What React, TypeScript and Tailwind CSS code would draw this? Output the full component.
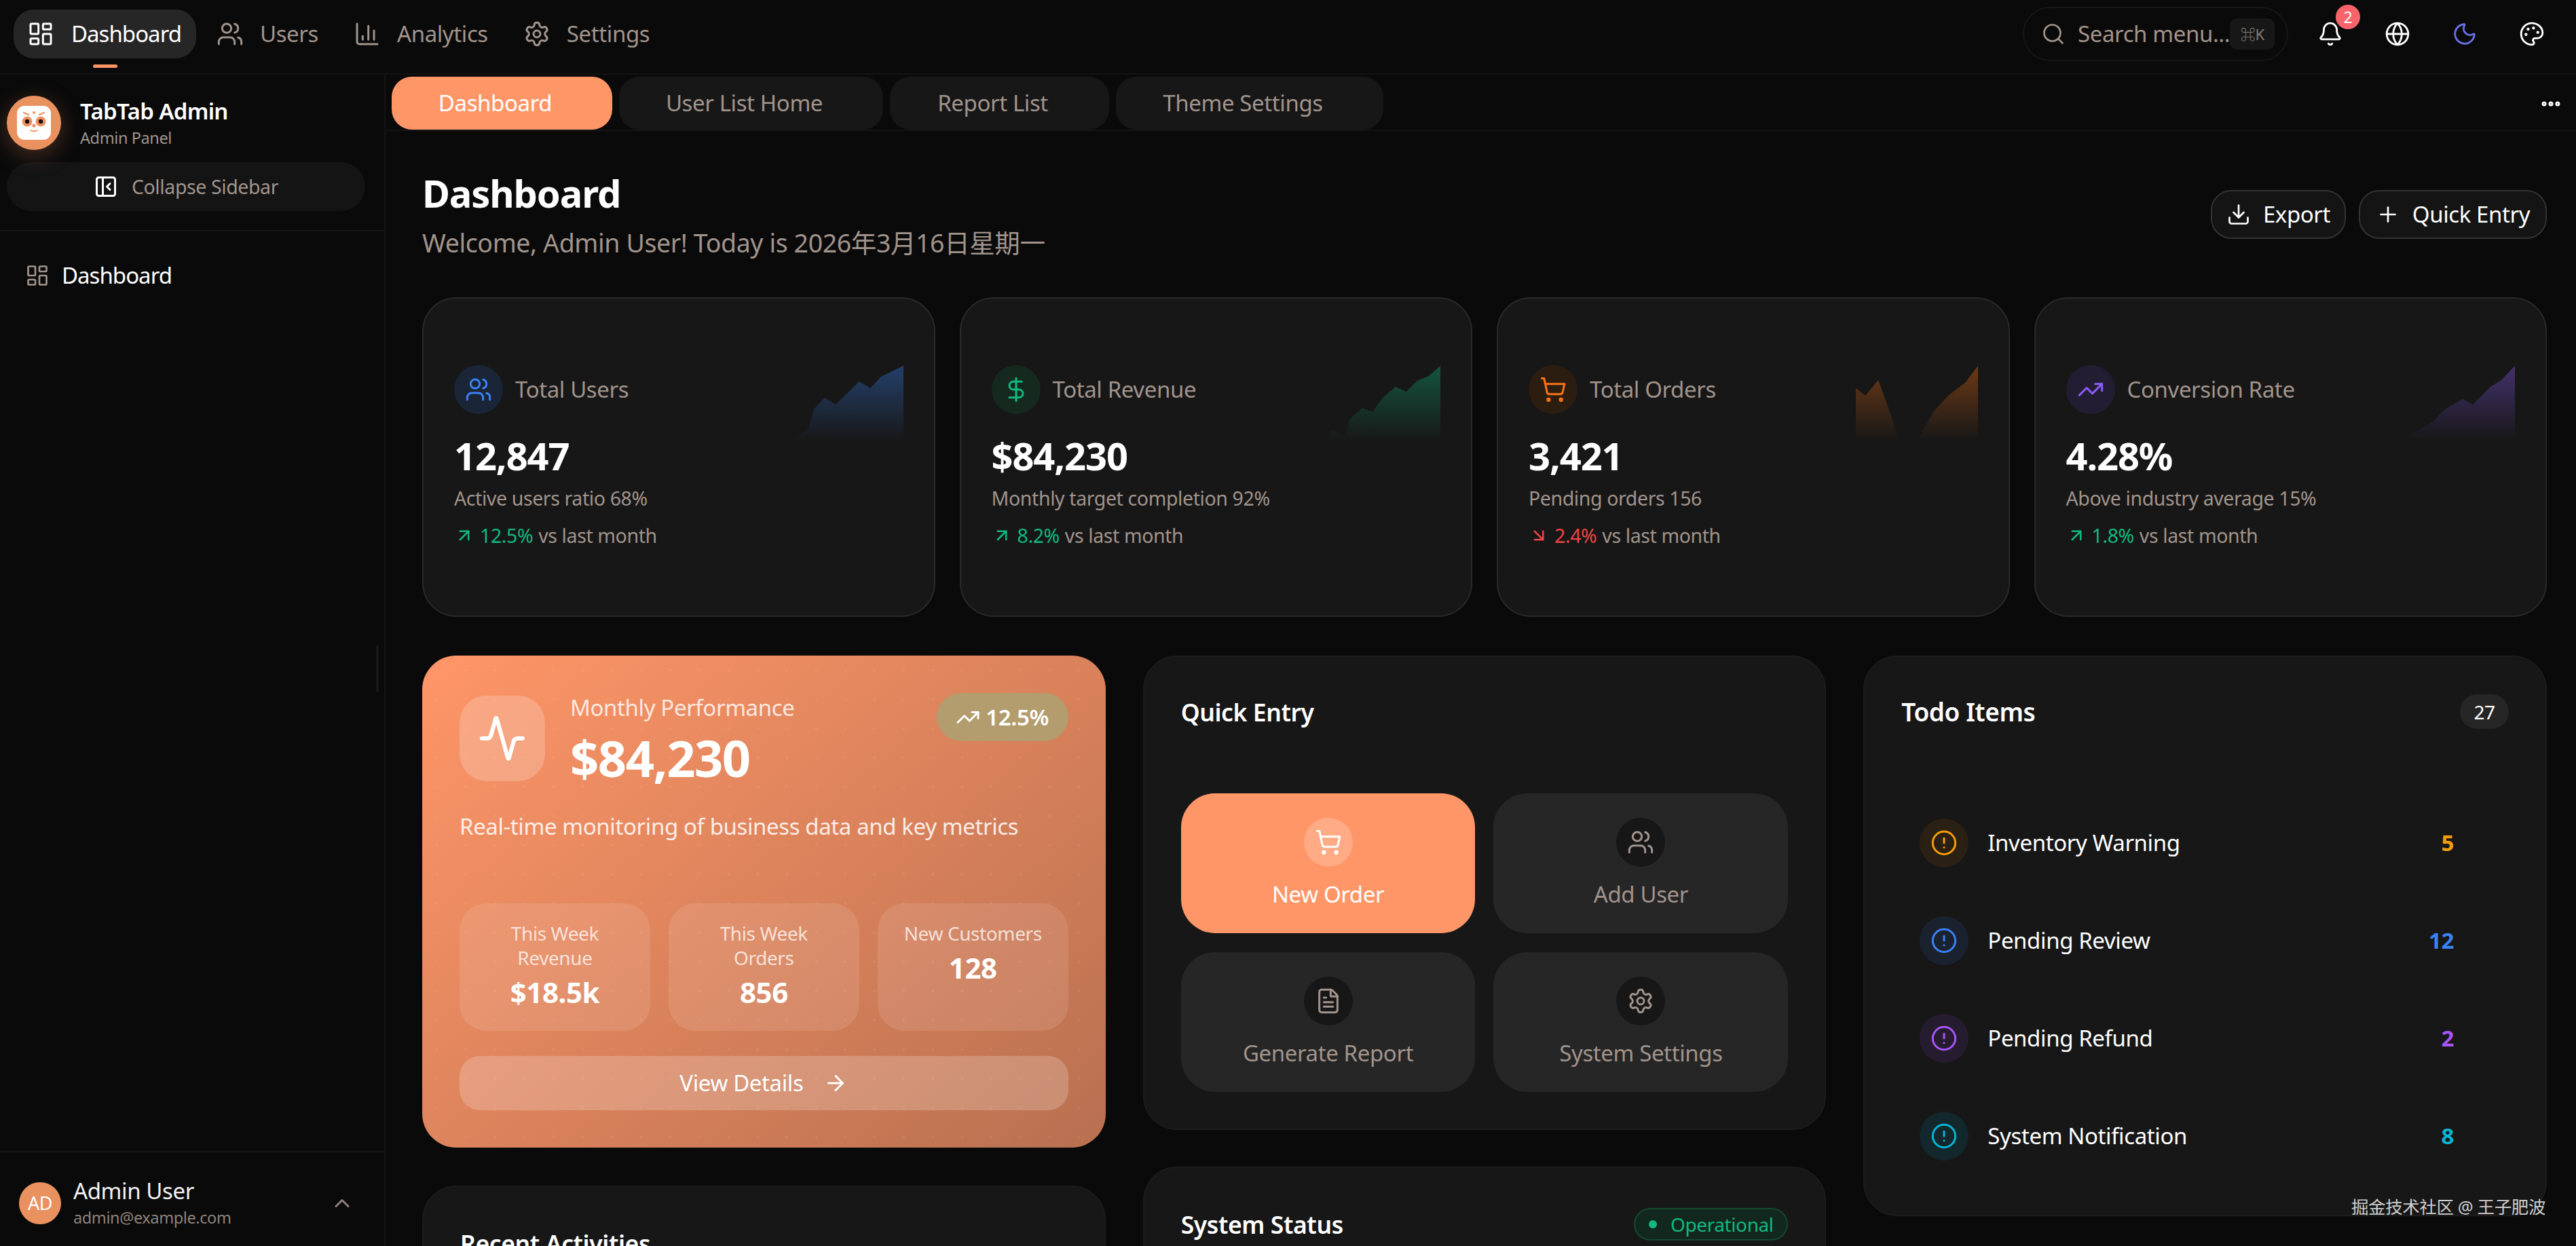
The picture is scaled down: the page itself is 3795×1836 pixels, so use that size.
import {
  Activity,
  ArrowDownRight,
  ArrowRight,
  ArrowUpRight,
  Bell,
  ChartColumn,
  ChevronUp,
  CircleAlert,
  DollarSign,
  Download,
  Ellipsis,
  FileText,
  Globe,
  LayoutDashboard,
  Moon,
  Palette,
  PanelLeftClose,
  Plus,
  Search,
  Settings,
  ShoppingCart,
  TrendingUp,
  Users,
} from "lucide-react";

const navItems = [
  { label: "Users", icon: Users },
  { label: "Analytics", icon: ChartColumn },
  { label: "Settings", icon: Settings },
];

const tabs = [
  { label: "User List Home", width: "w-[389px]" },
  { label: "Report List", width: "w-[323px]" },
  { label: "Theme Settings", width: "w-[394px]" },
];

const statCards = [
  {
    label: "Total Users",
    value: "12,847",
    desc: "Active users ratio 68%",
    delta: "12.5%",
    up: true,
    icon: Users,
    iconClass: "bg-[#1a2537] text-[#3b82f6]",
    color: "#3b82f6",
    id: "spark-blue",
    points: "13,112 39,95 48,65 64,48 80,58 115,24 131,34 147,17 180,1 180,112",
  },
  {
    label: "Total Revenue",
    value: "$84,230",
    desc: "Monthly target completion 92%",
    delta: "8.2%",
    up: true,
    icon: DollarSign,
    iconClass: "bg-[#15291f] text-[#10b981]",
    color: "#10b981",
    id: "spark-green",
    points: "13,105 20,95 41,105 46,80 65,63 80,69 96,47 114,32 130,39 146,23 163,16 180,1 180,112 13,112",
  },
  {
    label: "Total Orders",
    value: "3,421",
    desc: "Pending orders 156",
    delta: "2.4%",
    up: false,
    icon: ShoppingCart,
    iconClass: "bg-[#2c1d11] text-[#f97316]",
    color: "#f97316",
    id: "spark-orange",
    points: "0,34 14,45 33,22 48,63 64,112 90,112 115,68 136,45 162,25 180,1 180,112 0,112",
  },
  {
    label: "Conversion Rate",
    value: "4.28%",
    desc: "Above industry average 15%",
    delta: "1.8%",
    up: true,
    icon: TrendingUp,
    iconClass: "bg-[#231d33] text-[#8b5cf6]",
    color: "#8b5cf6",
    id: "spark-purple",
    points: "15,108 57,85 77,65 103,50 118,58 144,32 160,22 180,1 180,112",
  },
];

const weekStats = [
  { label: "This Week Revenue", value: "$18.5k" },
  { label: "This Week Orders", value: "856" },
  { label: "New Customers", value: "128" },
];

const quickEntries = [
  { label: "New Order", icon: ShoppingCart, active: true },
  { label: "Add User", icon: Users },
  { label: "Generate Report", icon: FileText },
  { label: "System Settings", icon: Settings },
];

const todos = [
  { label: "Inventory Warning", count: "5", text: "text-[#f59e0b]", bg: "bg-[#2a2013]" },
  { label: "Pending Review", count: "12", text: "text-[#3b82f6]", bg: "bg-[#1a2230]" },
  { label: "Pending Refund", count: "2", text: "text-[#a855f7]", bg: "bg-[#261c30]" },
  { label: "System Notification", count: "8", text: "text-[#06b6d4]", bg: "bg-[#13282c]" },
];

function Logo() {
  return (
    <svg width="80" height="80" viewBox="0 0 80 80" className="shrink-0 drop-shadow-[0_8px_16px_rgba(255,150,104,0.25)]">
      <circle cx="40" cy="40" r="40" fill="#e9915f" />
      <rect x="15" y="15" width="50" height="50" rx="11" fill="#fff" />
      <circle cx="30" cy="38" r="7.5" fill="#f0905f" />
      <circle cx="50" cy="38" r="7.5" fill="#f0905f" />
      <circle cx="30" cy="38" r="3.2" fill="#111" />
      <circle cx="50" cy="38" r="3.2" fill="#111" />
      <circle cx="40" cy="25" r="2" fill="#f0905f" />
      <circle cx="40" cy="44" r="2.6" fill="#f0905f" />
      <path d="M25 25l7 3M55 25l-7 3" stroke="#f0905f" strokeWidth="2.4" strokeLinecap="round" />
      <path d="M35 51q5 3 10 0" stroke="#f0905f" strokeWidth="1.8" fill="none" strokeLinecap="round" />
    </svg>
  );
}

function Sparkline({ color, id, points }: { color: string; id: string; points: string }) {
  return (
    <svg width="180" height="112" viewBox="0 0 180 112" className="absolute right-[45px] top-[98px]">
      <defs>
        <linearGradient id={id} x1="0" y1="0" x2="0" y2="1">
          <stop offset="0" stopColor={color} stopOpacity="0.38" />
          <stop offset="1" stopColor={color} stopOpacity="0" />
        </linearGradient>
      </defs>
      <polygon points={points} fill={`url(#${id})`} />
    </svg>
  );
}

export default function App() {
  return (
    <div className="relative flex h-[1836px] w-[3795px] flex-col overflow-hidden bg-[#0a0a0a] font-['Noto_Sans','Noto_Sans_CJK_SC',sans-serif] text-[33px] tracking-[-0.012em] text-white">
      {/* top nav */}
      <header className="flex h-[110px] shrink-0 items-start border-b-2 border-[#141414] pl-[20px] pr-[16px]">
        <div className="mt-[14px] flex gap-[10px]">
          <div className="relative flex h-[72px] items-center gap-[25px] rounded-[30px] bg-[#262626] pl-[20px] pr-[22px]">
            <LayoutDashboard size={40} strokeWidth={1.8} />
            <span className="tracking-[-0.03em]">Dashboard</span>
            <div className="absolute left-[117px] top-[81px] h-[5px] w-[36px] rounded-full bg-[#ff9668]" />
          </div>
          {navItems.map((item) => (
            <div key={item.label} className="flex h-[72px] items-center gap-[24px] pl-[20px] pr-[22px] text-[#a1948c]">
              <item.icon size={40} strokeWidth={1.8} />
              <span>{item.label}</span>
            </div>
          ))}
        </div>
        <div className="ml-auto mt-[10px] flex items-center">
          <div className="mr-[12px] flex h-[80px] w-[391px] items-center rounded-full border-2 border-[#171717] pl-[25px] pr-[24px] text-[#a1948c]">
            <Search size={36} strokeWidth={1.8} className="shrink-0" />
            <span className="ml-[18px] whitespace-nowrap">Search menu...</span>
            <span className="ml-auto flex h-[46px] w-[66px] shrink-0 items-center justify-center rounded-[10px] bg-[#171717] text-[22px] text-[#8a7f78]">⌘K</span>
          </div>
          <div className="relative flex w-[99px] justify-center">
            <Bell size={38} strokeWidth={1.8} />
            <span className="absolute left-[58px] top-[-24px] flex h-[36px] w-[36px] items-center justify-center rounded-full bg-[#f8646a] text-[23px]">2</span>
          </div>
          <div className="flex w-[99px] justify-center"><Globe size={38} strokeWidth={1.8} /></div>
          <div className="flex w-[99px] justify-center text-[#6a72e8]"><Moon size={38} strokeWidth={1.8} /></div>
          <div className="flex w-[99px] justify-center"><Palette size={38} strokeWidth={1.8} /></div>
        </div>
      </header>

      <div className="flex min-h-0 flex-1">
        {/* sidebar */}
        <aside className="relative flex w-[568px] shrink-0 flex-col border-r-2 border-[#141414]">
          <div className="border-b-2 border-[#161616] px-[10px] pb-[28px] pt-[31px]">
            <div className="flex items-center gap-[28px]">
              <Logo />
              <div>
                <div className="text-[33px] font-semibold leading-[44px] tracking-[-0.02em]">TabTab Admin</div>
                <div className="text-[23.5px] leading-[34px] text-[#a1948c]">Admin Panel</div>
              </div>
            </div>
            <div className="mt-[18px] flex h-[72px] w-[528px] items-center justify-center gap-[20px] rounded-[36px] bg-[#141414] text-[28.5px] text-[#a1948c]">
              <PanelLeftClose size={36} strokeWidth={2} className="text-white" />
              <span>Collapse Sidebar</span>
            </div>
          </div>
          <div className="mt-[40px] flex items-center gap-[18px] pl-[37px]">
            <LayoutDashboard size={36} strokeWidth={1.8} className="text-[#a1948c]" />
            <span className="tracking-[-0.03em]">Dashboard</span>
          </div>
          <div className="absolute right-[8px] top-[840px] h-[70px] w-[4px] rounded-full bg-[#181818]" />
          <div className="mt-auto flex h-[140px] items-center border-t-2 border-[#161616] pl-[28px] pr-[44px] pt-[12px]">
            <div className="flex h-[62px] w-[62px] items-center justify-center rounded-full bg-[#e9915f] text-[27px]">AD</div>
            <div className="ml-[18px]">
              <div className="text-[33px] leading-[42px] text-[#f2f2f2]">Admin User</div>
              <div className="text-[23.5px] leading-[36px] text-[#8f837c]">admin@example.com</div>
            </div>
            <ChevronUp size={36} strokeWidth={2} className="ml-auto text-[#8f837c]" />
          </div>
        </aside>

        {/* main */}
        <main className="min-w-0 flex-1">
          <div className="flex h-[83px] items-end justify-between border-b-2 border-[#141414] pl-[9px] pr-[20px]">
            <div className="flex gap-[10px]">
              <div className="flex h-[78px] w-[325px] items-center justify-center rounded-[30px] bg-[#ff9668] pr-[20px]">Dashboard</div>
              {tabs.map((tab) => (
                <div key={tab.label} className={`flex h-[78px] items-center justify-center rounded-[30px] bg-[#171717] pr-[20px] text-[#a1948c] ${tab.width}`}>
                  {tab.label}
                </div>
              ))}
            </div>
            <Ellipsis size={34} strokeWidth={3} className="mb-[21px]" />
          </div>

          <div className="pl-[54px] pr-[43px]">
            <div className="flex items-start justify-between pt-[51px]">
              <div>
                <h1 className="text-[56px] font-bold leading-[80px] tracking-[-0.02em]">Dashboard</h1>
                <p className="mt-[6px] text-[37.5px] leading-[56px] text-[#a1948c]">Welcome, Admin User! Today is 2026年3月16日星期一</p>
              </div>
              <div className="mt-[36px] flex gap-[19px]">
                <button className="flex h-[72px] w-[199px] items-center justify-center gap-[18px] rounded-[30px] border-2 border-[#333] bg-[#141414]">
                  <Download size={36} strokeWidth={1.8} />
                  Export
                </button>
                <button className="flex h-[72px] w-[277px] items-center justify-center gap-[18px] rounded-[30px] border-2 border-[#333] bg-[#141414]">
                  <Plus size={36} strokeWidth={1.8} />
                  Quick Entry
                </button>
              </div>
            </div>

            {/* stat cards */}
            <div className="mt-[52px] grid grid-cols-4 gap-[36px]">
              {statCards.map((card) => (
                <div key={card.label} className="relative flex h-[471px] flex-col justify-center rounded-[50px] border-2 border-[#2a2a2a] bg-[#171717] px-[45px]">
                  <Sparkline color={card.color} id={card.id} points={card.points} />
                  <div className="flex items-center gap-[18px]">
                    <div className={`flex h-[72px] w-[72px] items-center justify-center rounded-full ${card.iconClass}`}>
                      <card.icon size={40} strokeWidth={1.8} />
                    </div>
                    <span className="text-[#a1948c]">{card.label}</span>
                  </div>
                  <div className="mt-[21px] text-[56px] font-bold leading-[80px] tracking-[-0.02em]">{card.value}</div>
                  <div className="mt-[3px] text-[28.5px] leading-[40px] text-[#a1948c]">{card.desc}</div>
                  <div className="mt-[15px] flex items-center gap-[8px] text-[28.5px] leading-[40px] text-[#a1948c]">
                    {card.up ? (
                      <ArrowUpRight size={30} strokeWidth={2} className="text-[#10b981]" />
                    ) : (
                      <ArrowDownRight size={30} strokeWidth={2} className="text-[#ef4444]" />
                    )}
                    <span className={card.up ? "text-[#10b981]" : "text-[#ef4444]"}>{card.delta}</span>
                    <span>vs last month</span>
                  </div>
                </div>
              ))}
            </div>

            <div className="mt-[57px] grid grid-cols-3 gap-[55px]">
              {/* left column */}
              <div>
                <div className="relative overflow-hidden rounded-[50px] bg-[linear-gradient(140deg,#ff9668,#b87050)] px-[55px] pb-[55px] pt-[55px]">
                  <div className="absolute inset-0 bg-[radial-gradient(circle,rgba(255,255,255,0.06)_2px,transparent_2px)] bg-[size:43px_43px]" />
                  <div className="relative">
                    <div className="flex items-start">
                      <div className="mt-[4px] flex h-[126px] w-[126px] items-center justify-center rounded-[40px] bg-white/20">
                        <Activity size={72} strokeWidth={2} />
                      </div>
                      <div className="ml-[37px]">
                        <div className="leading-[44px] text-white/80">Monthly Performance</div>
                        <div className="mt-[2px] text-[74px] font-bold leading-[100px] tracking-[-0.02em]">$84,230</div>
                      </div>
                      <div className="ml-auto flex h-[71px] w-[194px] items-center justify-center gap-[8px] rounded-full bg-[#b39c6d] font-semibold">
                        <TrendingUp size={36} strokeWidth={2} />
                        12.5%
                      </div>
                    </div>
                    <p className="mt-[25px] text-[33px] leading-[52px] text-white/85">Real-time monitoring of business data and key metrics</p>
                    <div className="mt-[87px] grid grid-cols-3 gap-[27px]">
                      {weekStats.map((s) => (
                        <div key={s.label} className="h-[188px] rounded-[40px] bg-white/10 px-[32px] pt-[26px] text-center">
                          <div className="text-[28px] leading-[36px] text-white/75">{s.label}</div>
                          <div className="mt-[3px] text-[42px] font-bold leading-[60px]">{s.value}</div>
                        </div>
                      ))}
                    </div>
                    <button className="mt-[37px] flex h-[80px] w-full items-center justify-center gap-[30px] rounded-[30px] bg-white/20">
                      View Details
                      <ArrowRight size={36} strokeWidth={2} />
                    </button>
                  </div>
                </div>
                <div className="mt-[56px] h-[300px] rounded-[50px] border-2 border-[#1c1c1c] bg-[#171717] px-[54px] pt-[58px]">
                  <div className="text-[35.5px] font-semibold leading-[50px]">Recent Activities</div>
                </div>
              </div>

              {/* middle column */}
              <div>
                <div className="rounded-[50px] border-2 border-[#1c1c1c] bg-[#171717] px-[54px] pb-[54px] pt-[56px]">
                  <div className="text-[35.5px] font-semibold leading-[50px]">Quick Entry</div>
                  <div className="mt-[95px] grid grid-cols-2 gap-x-[27px] gap-y-[28px]">
                    {quickEntries.map((q) => (
                      <div
                        key={q.label}
                        className={`flex h-[206px] flex-col items-center rounded-[50px] pt-[36px] ${q.active ? "bg-[#ff9668] text-white" : "bg-[#262626] text-[#a1948c]"}`}
                      >
                        <div className={`flex h-[72px] w-[72px] items-center justify-center rounded-full ${q.active ? "bg-white/20" : "bg-[#171717]"}`}>
                          <q.icon size={40} strokeWidth={1.8} />
                        </div>
                        <span className="mt-[16px] leading-[50px]">{q.label}</span>
                      </div>
                    ))}
                  </div>
                </div>
                <div className="mt-[54px] h-[300px] rounded-[50px] border-2 border-[#1c1c1c] bg-[#171717] px-[54px] pt-[58px]">
                  <div className="flex items-center justify-between">
                    <div className="text-[35.5px] font-semibold leading-[50px]">System Status</div>
                    <div className="flex h-[48px] w-[227px] items-center justify-center gap-[20px] rounded-full border-2 border-[#14492f] bg-[#12281e] text-[28px] text-[#10b981]">
                      <span className="h-[12px] w-[12px] rounded-full bg-[#10b981]" />
                      Operational
                    </div>
                  </div>
                </div>
              </div>

              {/* right column */}
              <div className="h-[826px] rounded-[50px] border-2 border-[#1c1c1c] bg-[#171717] pl-[54px] pr-[54px] pt-[55px]">
                <div className="flex items-center justify-between">
                  <div className="text-[37px] font-semibold leading-[50px]">Todo Items</div>
                  <div className="flex h-[51px] w-[72px] items-center justify-center rounded-full bg-[#262626] text-[28px]">27</div>
                </div>
                <div className="mt-[132px] flex flex-col gap-[72px] pl-[27px] pr-[81px]">
                  {todos.map((t) => (
                    <div key={t.label} className="flex h-[72px] items-center">
                      <div className={`flex h-[72px] w-[72px] items-center justify-center rounded-full ${t.bg} ${t.text}`}>
                        <CircleAlert size={40} strokeWidth={1.8} />
                      </div>
                      <span className="ml-[28px]">{t.label}</span>
                      <span className={`ml-auto font-bold ${t.text}`}>{t.count}</span>
                    </div>
                  ))}
                </div>
              </div>
            </div>
          </div>
        </main>
      </div>

      <div className="absolute bottom-[38px] right-[45px] text-[25.5px] leading-[40px] text-[#d0d0d0]">掘金技术社区 @ 王子肥波</div>
    </div>
  );
}
